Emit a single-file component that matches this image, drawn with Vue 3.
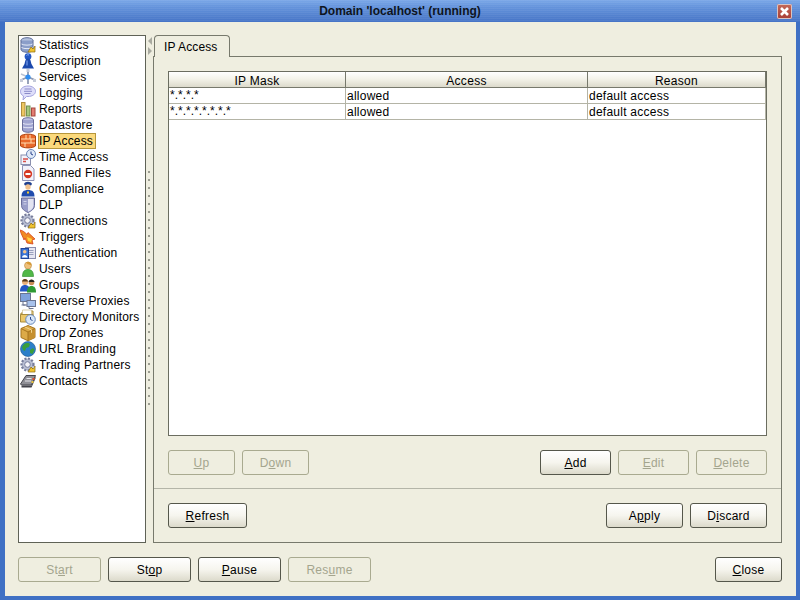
<script setup>
const shapes = {
  statistics: '<ellipse cx="7" cy="3.500" rx="6" ry="2.800" fill="#b4c2de" stroke="#5c6b96"/><path d="M1 3.500v9c0 1.600 3 2.800 6 2.800s6-1.200 6-2.800v-9" fill="#8b9ec9" stroke="#5c6b96"/><path d="M1.500 7c2 1.500 9 1.500 11 0M1.500 10.500c2 1.500 9 1.500 11 0" fill="none" stroke="#e4eaf7"/><path d="M8 15l3-5 2 2 2-3v6z" fill="#f0c330" stroke="#8b6a10" stroke-width=".7"/>',
  description: '<circle cx="8" cy="3.600" r="3.400" fill="#2458c4"/><path d="M8 5.500C5 5.500 5.200 9 4.500 11L2 15.500h12L11.500 11C10.800 9 11 5.500 8 5.500z" fill="#1b49ad"/><path d="M6.500 2.500a2 2 0 0 1 2.500-.5M7 7.500v5" stroke="#86abf5" fill="none"/>',
  services: '<path d="M8 1v14M1 11l7-3 7 3" stroke="#8d99b3" stroke-width="1.800" fill="none"/><path d="M1 5l7 3" stroke="#b9c2d4" stroke-width="1.400"/><circle cx="8" cy="8" r="2.600" fill="#2f8df0"/><rect x="6.500" y="0" width="3" height="3" fill="#c4cad8"/><rect x="0" y="10" width="3" height="3" fill="#c4cad8"/><rect x="13" y="10" width="3" height="3" fill="#c4cad8"/>',
  logging: '<path d="M8 1c4.200 0 7.500 2.300 7.500 5.300s-3.300 5.200-7.500 5.200H6.500L3 15l.5-4C1.500 10 .5 8.500.5 6.300.5 3.300 3.800 1 8 1z" fill="#dedefa" stroke="#a2a2de"/><path d="M4.500 4h7M4 6.300h8M4.500 8.500h6" stroke="#8a8ac8"/>',
  reports: '<rect x="1.500" y="1.500" width="3.500" height="13.500" fill="#eec863" stroke="#b18e3c"/><rect x="6.500" y="5" width="3.500" height="10" fill="#a6c97e" stroke="#73914f"/><rect x="11.500" y="7" width="3.500" height="8" fill="#e37d72" stroke="#a5483f"/>',
  datastore: '<ellipse cx="8" cy="3" rx="5.500" ry="2.300" fill="#bdc1e2" stroke="#6a6e9a"/><path d="M2.500 3v10c0 1.300 2.700 2.300 5.500 2.300s5.500-1 5.500-2.300V3" fill="#a0a4d0" stroke="#6a6e9a"/><path d="M3 6.500c2 1 8 1 10 0M3 10c2 1 8 1 10 0" stroke="#e4e6f5" fill="none"/>',
  ip: '<path d="M.5 3c3-2.500 12-2.500 15 0v10c-3 2.500-12 2.500-15 0z" fill="#e8692a" stroke="#b04310"/><path d="M1 6h14M1 10h14M6 2v4M11 6v4M5 10v4M10 2v4" stroke="#ffdcae"/>',
  time: '<rect x="1" y="6" width="9.500" height="9.500" fill="#f3f3fb" stroke="#8a8fae"/><path d="M3 10h5M3 12.500h3" stroke="#d8504a" stroke-width="1.500"/><circle cx="11" cy="5" r="4.500" fill="#dfe9f8" stroke="#6c86b8"/><path d="M11 2.500v2.500l2 1" stroke="#27408b" fill="none"/>',
  banned: '<path d="M2.500 .5h8l3.500 3.500v11.500H2.500z" fill="#f2f2fa" stroke="#8f93b6"/><circle cx="8" cy="9" r="4.200" fill="#d63a26"/><rect x="5.500" y="8" width="5" height="2" fill="#fff"/>',
  compliance: '<path d="M4 3c1-3 7-3 8 0l-1 1.500H5z" fill="#20408e"/><circle cx="8" cy="6" r="2.700" fill="#f1c08c"/><path d="M1.500 15.500c0-4.500 2-6.500 6.500-6.500s6.500 2 6.500 6.500z" fill="#1f4cae"/><rect x="7" y="10.500" width="2" height="2" fill="#f2c830"/>',
  dlp: '<path d="M1.500 1h13v7.500c0 3.500-3.300 5.600-6.500 7-3.200-1.400-6.500-3.500-6.500-7z" fill="#9a9ec9" stroke="#686c99"/><path d="M8 2v12.800c3-1.400 5.500-3.300 5.500-6.300V2z" fill="#e2e3f1"/><path d="M3.500 4.500h3M3.500 7h3" stroke="#d4d6ec"/>',
  gears: '<circle cx="7.500" cy="7.500" r="6" fill="#b9bfd4" stroke="#767c9a" stroke-width="2.200" stroke-dasharray="2 1.500"/><circle cx="7.500" cy="7.500" r="2.800" fill="#f4f4fa" stroke="#767c9a"/><path d="M8 15l3-5 2 2 2-3v6z" fill="#f0c330" stroke="#8b6a10" stroke-width=".7"/>',
  triggers: '<path d="M0 1c3 .5 5 2.500 7 4.500l1-2 7 6.500-3 1 1 4-6-1-2-5-1 2C3 8 1 5 0 1z" fill="#f08a20" stroke="#d7401a" stroke-width=".8"/><path d="M7 8l5 2-1 3-3-1z" fill="#ffd23c"/>',
  auth: '<rect x="5.500" y="2.500" width="10" height="11" fill="#e6e6f2" stroke="#8a8eae"/><path d="M9 5.500h4.500M9 7.500h4.500M9 9.500h4.500" stroke="#9aa0bd"/><rect x="1" y="3.500" width="7.500" height="10" fill="#3a76d8" stroke="#20459a"/><circle cx="4.700" cy="6.800" r="1.800" fill="#f4c48e"/><path d="M2 12.500c0-3.500 5.500-3.500 5.500 0z" fill="#fff"/>',
  users: '<circle cx="8" cy="4.500" r="3.500" fill="#f0c07a" stroke="#b38740" stroke-width=".6"/><path d="M6 1.500c2-1.500 5.500-.5 5.500 3l-4-1.500z" fill="#d89a34"/><path d="M2.500 15.500c0-4.500 1.500-7 5.500-7s5.500 2.500 5.500 7z" fill="#52b848" stroke="#2b8a2a" stroke-width=".6"/>',
  groups: '<circle cx="5" cy="5" r="3" fill="#e9b07a"/><path d="M2 4.500c.5-3.500 5.500-3.500 6 0z" fill="#5a3b16"/><path d="M0 14.500c0-4.500 2-6.500 5-6.500s5 2 5 6.500z" fill="#2458c4"/><circle cx="11.500" cy="5.500" r="2.800" fill="#c98c56"/><path d="M8.500 5c.5-3.500 5.500-3.500 6 0z" fill="#26241e"/><path d="M7 15.500c0-4.500 1.500-6.500 4.500-6.500s4.500 2 4.500 6.500z" fill="#2f9a34"/>',
  proxies: '<rect x=".5" y=".5" width="10" height="8" fill="#7ea2dc" stroke="#6b7591"/><rect x="7" y="7.500" width="8.500" height="6" fill="#a8c2ec" stroke="#6b7591"/><path d="M3 8.500V12h4M1.500 12h4M9 13.500v2h4.500" stroke="#6b7591" fill="none"/>',
  monitors: '<path d="M1 4h5l1-2h6v9H1z" fill="#f4d98a" stroke="#a88b3c"/><path d="M2.500 1h9v4.500h-9z" fill="#fff" stroke="#c4b078" stroke-width=".6"/><path d="M.5 5.500h12.500V13H.5z" fill="#ecc768" stroke="#a88b3c"/><circle cx="10.500" cy="10.500" r="4.800" fill="#d8e6f8" stroke="#6686b8"/><path d="M10.500 8v2.500l2 1" stroke="#2e4a90" fill="none"/>',
  zones: '<path d="M8 .5l7 3v9L8 15.800 1 12.500v-9z" fill="#dcaa48" stroke="#a6741e"/><path d="M8 7l7-3.500v9L8 15.800z" fill="#c58f2e"/><path d="M1 3.500L8 7l7-3.500M8 7v8.800" stroke="#a6741e" fill="none"/><path d="M5 2l6.500 3v2.800" stroke="#f2d48a" fill="none"/>',
  globe: '<circle cx="8" cy="8" r="7.500" fill="#2c7fc9" stroke="#17548f" stroke-width=".6"/><path d="M4 3c2-1.500 5-1.500 6 0l-1 3-3 1-1 3-2-1-1-3zM10 9l3-2 1.500 2-2 4-2.500-1z" fill="#3b9e3b"/>',
  contacts: '<path d="M.5 11L6 2.500h9.500l-4 9.500H1.500z" fill="#8f8f96" stroke="#45454c"/><path d="M1.500 12.500h10l4-9v2l-4 9h-10z" fill="#42424a"/><path d="M5 8h6M6.500 5.500h5" stroke="#e4e4ea"/><rect x="12.500" y="5" width="2" height="2" fill="#e24a30"/><rect x="11.500" y="8" width="2" height="2" fill="#e8c33a"/>'
}
const items = [
  ['Statistics', 'statistics'], ['Description', 'description'], ['Services', 'services'],
  ['Logging', 'logging'], ['Reports', 'reports'], ['Datastore', 'datastore'],
  ['IP Access', 'ip'], ['Time Access', 'time'], ['Banned Files', 'banned'],
  ['Compliance', 'compliance'], ['DLP', 'dlp'], ['Connections', 'gears'],
  ['Triggers', 'triggers'], ['Authentication', 'auth'], ['Users', 'users'],
  ['Groups', 'groups'], ['Reverse Proxies', 'proxies'], ['Directory Monitors', 'monitors'],
  ['Drop Zones', 'zones'], ['URL Branding', 'globe'], ['Trading Partners', 'gears'],
  ['Contacts', 'contacts']
].map(([label, icon]) => ({ label, svg: shapes[icon] }))
const rows = [
  { mask: '*.*.*.*', access: 'allowed', reason: 'default access' },
  { mask: '*.*.*.*.*.*.*.*', access: 'allowed', reason: 'default access' }
]
</script>

<template>
  <div class="window">
    <div class="titlebar">
      <span class="title">Domain 'localhost' (running)</span>
      <span class="close-x">
        <svg width="15" height="15" viewBox="0 0 15 15"><path d="M4 4l7 7M11 4l-7 7" stroke="#fff" stroke-width="2.600"/></svg>
      </span>
    </div>
    <div class="frame">
      <div class="main">
        <ul class="tree">
          <li v-for="item in items" :key="item.label" class="tree-row">
            <svg class="tree-icon" width="16" height="16" viewBox="0 0 16 16" v-html="item.svg"></svg>
            <span class="tree-label" :class="{ selected: item.label === 'IP Access' }">{{ item.label }}</span>
          </li>
        </ul>
        <div class="splitter">
          <span class="arrow left"></span>
          <span class="arrow right"></span>
          <span class="grip"></span>
        </div>
        <div class="tabs">
          <div class="tabstrip"><div class="tab">IP Access</div></div>
          <div class="panel">
            <div class="panel-top">
              <div class="table">
                <div class="thead">
                  <div class="th c1">IP Mask</div>
                  <div class="th c2">Access</div>
                  <div class="th c3">Reason</div>
                </div>
                <div v-for="(row, i) in rows" :key="i" class="tr">
                  <div class="td c1 mask">{{ row.mask }}</div>
                  <div class="td c2">{{ row.access }}</div>
                  <div class="td c3">{{ row.reason }}</div>
                </div>
              </div>
              <div class="btnrow">
                <div class="group">
                  <button class="btn w67 off"><u>U</u>p</button>
                  <button class="btn w67 off">D<u>o</u>wn</button>
                </div>
                <div class="group">
                  <button class="btn w71"><u>A</u>dd</button>
                  <button class="btn w71 off"><u>E</u>dit</button>
                  <button class="btn w71 off"><u>D</u>elete</button>
                </div>
              </div>
            </div>
            <div class="panel-bottom">
              <button class="btn w79"><u>R</u>efresh</button>
              <div class="group">
                <button class="btn w77">A<u>p</u>ply</button>
                <button class="btn w77">D<u>i</u>scard</button>
              </div>
            </div>
          </div>
        </div>
      </div>
      <div class="footer">
        <div class="group">
          <button class="btn w83 off">St<u>a</u>rt</button>
          <button class="btn w83">St<u>o</u>p</button>
          <button class="btn w83"><u>P</u>ause</button>
          <button class="btn w83 off">Res<u>u</u>me</button>
        </div>
        <button class="btn w67"><u>C</u>lose</button>
      </div>
    </div>
  </div>
</template>

<style scoped>
.window {
  width: 800px;
  height: 600px;
  display: flex;
  flex-direction: column;
  font-family: "Liberation Sans", Arial, sans-serif;
  font-size: 12px;
  color: #000;
  background: #3f70c4;
  overflow: hidden;
}
.titlebar {
  height: 22px;
  flex: none;
  display: flex;
  align-items: center;
  justify-content: center;
  position: relative;
  background: repeating-linear-gradient(to bottom, rgba(255,255,255,0.05) 0 1px, rgba(0,0,0,0) 1px 2px),
    linear-gradient(to bottom, #7ba8e8 0%, #6594dc 30%, #4674c6 100%);
}
.title {
  font-weight: bold;
  font-size: 12px;
  color: #0e1420;
}
.close-x {
  position: absolute;
  right: 8px;
  top: 4px;
  width: 15px;
  height: 15px;
  border-radius: 2px;
  background: linear-gradient(to bottom, #c46a5a, #a83e36);
  box-shadow: 0 0 0 1px #d8c4c4 inset;
  display: flex;
}
.frame {
  flex: 1;
  min-height: 0;
  margin: 0 4px 4px 5px;
  background: #efeee0;
  padding: 13px 14px 14px 13px;
  display: flex;
  flex-direction: column;
}
.main {
  flex: 1;
  min-height: 0;
  display: flex;
}
.tree {
  width: 128px;
  box-sizing: border-box;
  margin: 0;
  padding: 1px 0 0 1px;
  list-style: none;
  background: #fff;
  border: 1px solid #5f6256;
}
.tree-row {
  height: 16px;
  display: flex;
  align-items: center;
}
.tree-icon {
  flex: none;
  margin-right: 2px;
}
.tree-label {
  padding: 0 2px 0 0;
  line-height: 14px;
  border: 1px solid transparent;
  white-space: nowrap;
  letter-spacing: 0.17px;
}
.tree-label.selected {
  background: #fbd97c;
  border-color: #b6963c;
}
.splitter {
  width: 7px;
  flex: none;
  display: flex;
  flex-direction: column;
  align-items: flex-start;
  padding: 2px 0 0 2px;
  box-sizing: border-box;
  gap: 2px;
  position: relative;
}
.arrow {
  width: 0;
  height: 0;
  border-top: 4px solid transparent;
  border-bottom: 4px solid transparent;
}
.arrow.left { border-right: 4px solid #a9aaa0; }
.arrow.right { border-left: 4px solid #a9aaa0; }
.grip {
  position: absolute;
  left: 2px;
  top: 136px;
  bottom: 136px;
  width: 2px;
  background: repeating-linear-gradient(to bottom, #9d9e92 0 2px, transparent 2px 8px);
}
.tabs {
  flex: 1;
  min-width: 0;
  display: flex;
  flex-direction: column;
}
.tabstrip {
  height: 21px;
  flex: none;
  padding-left: 1px;
  position: relative;
  z-index: 1;
}
.tab {
  width: 76px;
  height: 22px;
  box-sizing: border-box;
  background: #efeee0;
  border: 1px solid #77796c;
  border-bottom: none;
  border-radius: 4px 4px 0 0;
  padding: 4px 0 0 9px;
  line-height: 14px;
  letter-spacing: 0.1px;
}
.panel {
  flex: 1;
  min-height: 0;
  display: flex;
  flex-direction: column;
  border: 1px solid #77796c;
}
.panel-top {
  flex: 1;
  min-height: 0;
  display: flex;
  flex-direction: column;
  padding: 14px 14px 13px 14px;
  border-bottom: 1px solid #b4b5a8;
}
.table {
  flex: 1;
  min-height: 0;
  background: #fff;
  border: 1px solid #6b6d60;
}
.thead {
  height: 16px;
  display: flex;
  background: linear-gradient(to bottom, #fff 0%, #f3f2e8 45%, #d9d7c8 100%);
}
.th {
  box-sizing: border-box;
  text-align: center;
  line-height: 18px;
  border-right: 1px solid #77796c;
  border-bottom: 1px solid #77796c;
  letter-spacing: 0.3px;
}
.tr {
  height: 16px;
  display: flex;
}
.td {
  box-sizing: border-box;
  padding-left: 1px;
  line-height: 17px;
  border-right: 1px solid #b4b4a6;
  border-bottom: 1px solid #b4b4a6;
  white-space: nowrap;
  overflow: hidden;
  letter-spacing: 0.25px;
}
.td.mask {
  letter-spacing: 0;
  line-height: 14px;
}
.c1 { width: 177px; }
.c2 { width: 242px; }
.c3 { flex: 1; }
.btnrow {
  flex: none;
  margin-top: 14px;
  display: flex;
  justify-content: space-between;
}
.panel-bottom {
  flex: none;
  height: 53px;
  box-sizing: border-box;
  padding: 14px;
  display: flex;
  justify-content: space-between;
}
.group {
  display: flex;
  gap: 7px;
}
.footer {
  flex: none;
  margin-top: 14px;
  display: flex;
  justify-content: space-between;
}
.btn {
  height: 25px;
  box-sizing: border-box;
  padding: 1px 0 0;
  font: inherit;
  letter-spacing: 0.25px;
  color: #000;
  border: 1px solid #55574b;
  border-radius: 3px;
  background: linear-gradient(to bottom, #fff 0%, #f6f5ee 50%, #dcdacb 100%);
}
.btn.off {
  color: #a4a58e;
  border-color: #a9aa90;
  background: #efeee0;
}
.w67 { width: 67px; }
.w71 { width: 71px; }
.w77 { width: 77px; }
.w79 { width: 79px; }
.w83 { width: 83px; }
</style>
